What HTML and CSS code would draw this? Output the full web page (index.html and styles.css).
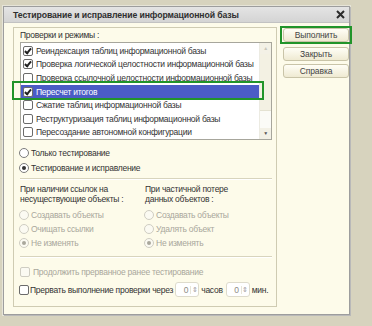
FILE: index.html
```html
<!DOCTYPE html>
<html lang="ru">
<head>
    <meta charset="UTF-8">
    <title>Тестирование и исправление информационной базы</title>
    <link rel="stylesheet" href="styles.css">
</head>
<body>
    <div class="window">
        <div class="titlebar">
            <span class="title">Тестирование и исправление информационной базы</span>
            <svg class="close" width="9" height="9" viewBox="0 0 9 9">
                <path d="M1 1 L8 8 M8 1 L1 8" stroke="#2b2b2b" stroke-width="2"/>
            </svg>
        </div>

        <div class="content">
            <!-- Основная группа -->
            <div class="group">
                <div class="caption">Проверки и режимы :</div>

                <div class="list">
                    <div class="rows">
                        <div class="row"><span class="check on"></span>Реиндексация таблиц информационной базы</div>
                        <div class="row"><span class="check on"></span>Проверка логической целостности информационной базы</div>
                        <div class="row"><span class="check"></span>Проверка ссылочной целостности информационной базы</div>
                        <div class="row selected"><span class="check on"></span>Пересчет итогов</div>
                        <div class="row"><span class="check"></span>Сжатие таблиц информационной базы</div>
                        <div class="row"><span class="check"></span>Реструктуризация таблиц информационной базы</div>
                        <div class="row"><span class="check"></span>Пересоздание автономной конфигурации</div>
                    </div>
                    <div class="scrollbar">
                        <span class="arrow up">&#9650;</span>
                        <span class="thumb"></span>
                        <span class="arrow down">&#9660;</span>
                    </div>
                    <div class="focus-frame"></div>
                </div>

                <div class="modes">
                    <div class="option"><span class="radio"></span>Только тестирование</div>
                    <div class="option"><span class="radio on"></span>Тестирование и исправление</div>
                </div>

                <div class="separator"></div>

                <div class="columns">
                    <div class="column">
                        <div class="subcaption">При наличии ссылок на<br>несуществующие объекты :</div>
                        <div class="option disabled"><span class="radio"></span>Создавать объекты</div>
                        <div class="option disabled"><span class="radio"></span>Очищать ссылки</div>
                        <div class="option disabled"><span class="radio on"></span>Не изменять</div>
                    </div>
                    <div class="column">
                        <div class="subcaption">При частичной потере<br>данных объектов :</div>
                        <div class="option disabled"><span class="radio"></span>Создавать объекты</div>
                        <div class="option disabled"><span class="radio"></span>Удалять объект</div>
                        <div class="option disabled"><span class="radio on"></span>Не изменять</div>
                    </div>
                </div>

                <div class="separator lower"></div>

                <div class="option disabled continue"><span class="check"></span>Продолжить прерванное ранее тестирование</div>
                <div class="option interrupt">
                    <span class="check"></span>Прервать выполнение проверки через
                    <span class="spin"><span class="value">0</span><span class="spin-btn">&#8661;</span></span>
                    <span class="unit">часов</span>
                    <span class="spin"><span class="value">0</span><span class="spin-btn">&#8661;</span></span>
                    <span class="unit">мин.</span>
                </div>
            </div>

            <!-- Кнопки -->
            <div class="buttons">
                <div class="default-frame"><button type="button">Выполнить</button></div>
                <button type="button">Закрыть</button>
                <button type="button">Справка</button>
            </div>
        </div>
    </div>
</body>
</html>
```

FILE: styles.css
```css
body {
    margin: 0;
    width: 372px;
    height: 326px;
    background-color: #d7d3be;
    font-family: "Liberation Sans", Arial, sans-serif;
    font-size: 8.5px;
    letter-spacing: -0.25px;
    color: #333;
    overflow: hidden;
    white-space: nowrap;
}
.window {
    margin: 6px 0 0 3px;
    width: 345px;
    height: 307px;
    background-color: #fdfbea;
    border: 1px solid #9d9d9d;
    box-shadow: 1px 1px 0 #b9b9b9, 0 0 0 1px #e6e4d8;
}
.titlebar {
    display: flex;
    align-items: center;
    justify-content: space-between;
    height: 15px;
    padding: 0 4px 0 9px;
    background: linear-gradient(#e4e4e4, #d4d4d4);
    border-bottom: 1px solid #c2c2c2;
}
.title {
    font-size: 8.7px;
    font-weight: bold;
    letter-spacing: -0.1px;
    color: #2f2f2f;
}
.close {
    display: block;
}
.content {
    display: flex;
    padding: 4px 0 0 9px;
}
.group {
    width: 258px;
    height: 278px;
    border: 1px solid #cfcbb2;
    padding: 0 4px 0 6px;
}
.caption {
    height: 14px;
    line-height: 14px;
}
.list {
    position: relative;
    display: flex;
    height: 96px;
    border: 1px solid #a7a69c;
    background-color: #fff;
}
.rows {
    flex: 1;
    padding-top: 1px;
}
.row {
    display: flex;
    align-items: center;
    height: 13.6px;
    padding-left: 2px;
}
.row.selected {
    background-color: #4b5cc6;
    color: #fff;
}
.check {
    width: 8px;
    height: 8px;
    margin-right: 3px;
    border: 1px solid #6b6b6b;
    border-radius: 2px;
    background-color: #fff;
    position: relative;
    flex: none;
}
.check.on::after {
    content: "";
    position: absolute;
    left: 2px;
    top: 0;
    width: 2px;
    height: 5px;
    border: solid #222;
    border-width: 0 2px 2px 0;
    transform: rotate(40deg);
}
.scrollbar {
    display: flex;
    flex-direction: column;
    width: 11px;
    background-color: #fbfbf7;
    border-left: 1px solid #ecebe2;
}
.arrow {
    height: 11px;
    font-size: 5px;
    line-height: 11px;
    text-align: center;
    background-color: #f3f1e6;
}
.arrow.up {
    color: #c9c7bb;
}
.arrow.down {
    color: #555;
    margin-top: auto;
}
.thumb {
    height: 56px;
    background-color: #f3f1e3;
    border-bottom: 1px solid #e4e2d2;
}
.focus-frame {
    position: absolute;
    left: -9px;
    top: 38px;
    width: 248px;
    height: 15px;
    border: 2px solid #21942a;
}
.modes {
    padding-top: 5px;
}
.option {
    display: flex;
    align-items: center;
    height: 15px;
}
.radio {
    width: 8px;
    height: 8px;
    margin-right: 2px;
    margin-left: -1px;
    border: 1px solid #7b7b7b;
    border-radius: 50%;
    background-color: #fff;
    position: relative;
    flex: none;
}
.radio.on::after {
    content: "";
    position: absolute;
    left: 2px;
    top: 2px;
    width: 4px;
    height: 4px;
    border-radius: 50%;
    background-color: #333;
}
.disabled {
    color: #a9a79c;
}
.disabled .radio,
.disabled .check {
    border-color: #cfcdc2;
    background-color: #fbfaf2;
}
.disabled .radio.on::after {
    background-color: #a9a79c;
}
.separator {
    height: 1px;
    margin: 3px 0 4px;
    background-color: #d8d4bd;
    border-bottom: 1px solid #fff;
}
.separator.lower {
    margin-top: 6px;
}
.columns {
    display: flex;
}
.column {
    width: 125px;
}
.column .option {
    height: 14px;
}
.subcaption {
    line-height: 10px;
    margin-bottom: 4px;
}
.continue {
    margin-top: 6px;
}
.interrupt {
    margin-top: 2px;
    height: 17px;
    color: #333;
}
.interrupt .check {
    margin-left: -1px;
    margin-right: 1px;
}
.spin {
    display: flex;
    align-items: center;
    width: 22px;
    height: 13px;
    margin: 0 2px 0 2px;
    border: 1px solid #dedbcc;
    border-radius: 3px;
    background-color: #fff;
    color: #8d8b84;
}
.unit + .spin {
    margin-left: 3px;
}
.value {
    flex: 1;
    text-align: right;
    padding-right: 2px;
}
.spin-btn {
    width: 7px;
    font-size: 7px;
    text-align: center;
    border-left: 1px solid #e7e5d8;
    color: #999;
}
.unit {
    color: #333;
}
.buttons {
    display: flex;
    flex-direction: column;
    gap: 3px;
    margin-left: 6px;
    padding-top: 1px;
}
.default-frame {
    border: 2px solid #21942a;
    margin: -2px -3px 0;
    padding: 0 1px;
}
button {
    width: 66px;
    height: 14px;
    padding: 0;
    font-family: inherit;
    font-size: 8.5px;
    letter-spacing: -0.1px;
    color: #444;
    background: linear-gradient(#fffef6, #efead2);
    border: 1px solid #c9c4a8;
    border-radius: 3px;
}
```
